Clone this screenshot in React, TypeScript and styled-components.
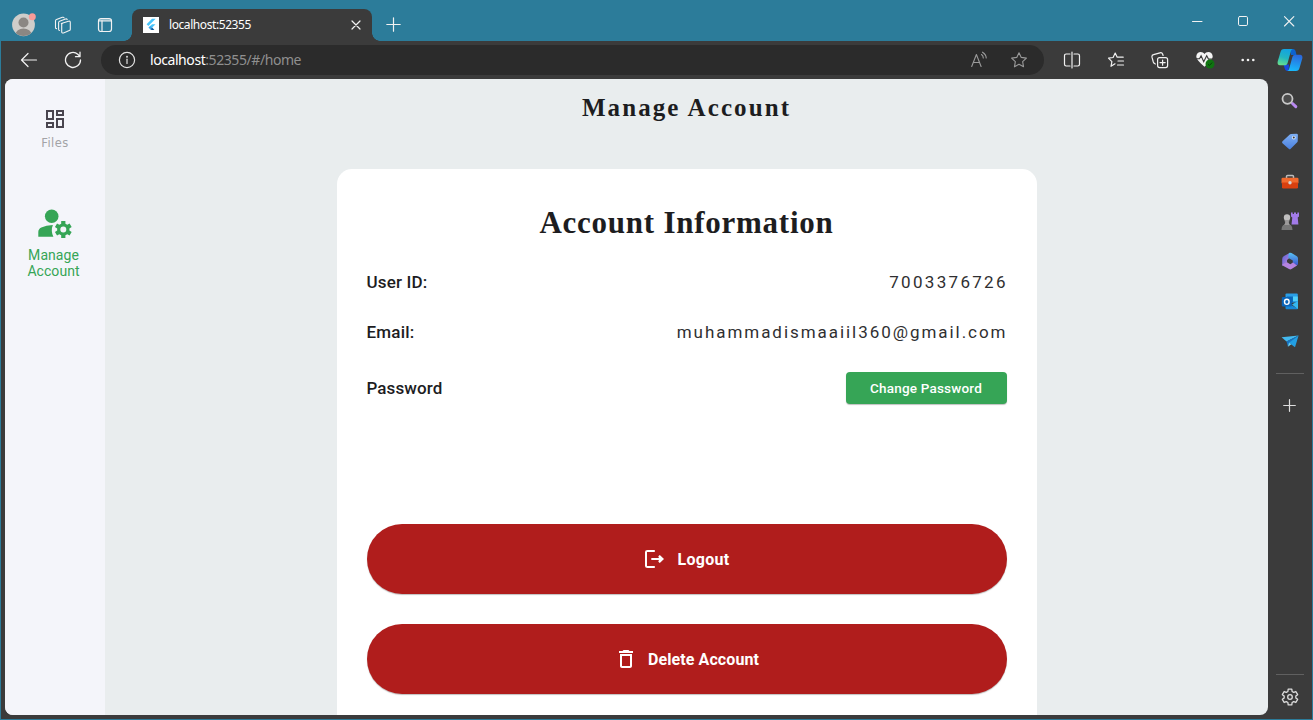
import React from "react";
import styled, { createGlobalStyle } from "styled-components";
import { MdOutlineDashboard, MdDeleteOutline } from "react-icons/md";

const GlobalStyle = createGlobalStyle`
  *, *::before, *::after { box-sizing: border-box; }
  body { margin: 0; overflow: hidden; font-family: Roboto, "Liberation Sans", sans-serif; }
  svg { display: block; flex: none; }
  button { font: inherit; border: 0; padding: 0; }
`;

const Window = styled.div`
  width: 1313px;
  height: 720px;
  display: flex;
  flex-direction: column;
  background: #3b3b3b;
  border: 1px solid #2c7c9a;
  border-top: 0;
`;

const TabStrip = styled.header`
  height: 41px;
  flex: none;
  display: flex;
  align-items: flex-end;
  background: #2c7c9a;
`;

const StripTools = styled.div`
  height: 33px;
  width: 131px;
  padding-left: 10px;
  display: flex;
  align-items: center;
`;

const Slot = styled.div<{ $w: number }>`
  width: ${(p) => p.$w}px;
  display: flex;
  justify-content: center;
  align-items: center;
`;

const Tab = styled.div`
  position: relative;
  width: 240px;
  height: 32px;
  padding: 0 11px 0 11px;
  display: flex;
  align-items: center;
  background: #3b3b3b;
  border-radius: 8px 8px 0 0;
  &::before, &::after {
    content: "";
    position: absolute;
    bottom: 0;
    width: 8px;
    height: 8px;
  }
  &::before { left: -8px; background: radial-gradient(circle at 0 0, transparent 7.5px, #3b3b3b 8px); }
  &::after { right: -8px; background: radial-gradient(circle at 100% 0, transparent 7.5px, #3b3b3b 8px); }
`;

const TabTitle = styled.span`
  flex: 1;
  padding-left: 10px;
  font: 12px/16px "Noto Sans", sans-serif;
  letter-spacing: -0.42px;
  color: #fff;
`;

const NewTab = styled.div`
  height: 33px;
  padding-left: 14px;
  display: flex;
  align-items: center;
`;

const Controls = styled.div`
  height: 41px;
  padding-top: 1px;
  margin-left: auto;
  display: flex;
`;

const Toolbar = styled.div`
  height: 38px;
  flex: none;
  display: flex;
  align-items: center;
`;

const AddressBar = styled.div`
  width: 943px;
  height: 30px;
  margin-left: 6px;
  padding: 0 16px 0 17px;
  display: flex;
  align-items: center;
  background: #2b2b2b;
  border-radius: 15px;
`;

const Url = styled.span`
  flex: 1;
  padding-left: 14px;
  font: 14px/20px "Noto Sans", sans-serif;
  letter-spacing: -0.43px;
  color: #8f8f8f;
  b { font-weight: 400; color: #fff; }
`;

const Body = styled.div`
  flex: 1;
  min-height: 0;
  display: flex;
  padding: 0 0 4px 4px;
`;

const Page = styled.div`
  width: 1263px;
  display: flex;
  overflow: hidden;
  border-radius: 8px;
  background: #e9edee;
`;

const Rail = styled.nav`
  width: 100px;
  display: flex;
  flex-direction: column;
  align-items: center;
  padding-top: 28px;
  background: #f4f5fa;
`;

const RailItem = styled.div<{ $active?: boolean }>`
  display: flex;
  flex-direction: column;
  align-items: center;
  margin-bottom: 52px;
  color: ${(p) => (p.$active ? "#36a556" : "#49454f")};
`;

const FilesLabel = styled.span`
  margin-top: 4px;
  font: 11.5px/16px "DejaVu Sans", sans-serif;
  letter-spacing: 0.45px;
  color: #a3a3a6;
`;

const AccountLabel = styled.span`
  margin: 4px 3px 0 0;
  font: 14px/16px Roboto, sans-serif;
  letter-spacing: 0.05px;
  text-align: center;
`;

const Main = styled.main`
  flex: 1;
  display: flex;
  flex-direction: column;
  align-items: center;
`;

const PageTitle = styled.h1`
  margin: 13px 0 45px;
  font: 700 25px/32px "Liberation Serif", serif;
  letter-spacing: 2.1px;
  color: #1d1d1f;
`;

const Card = styled.section`
  width: 700px;
  flex: 1;
  padding: 35px 30px 0;
  background: #fff;
  border-radius: 15px 15px 0 0;
`;

const CardTitle = styled.h2`
  margin: 0 0 18px;
  font: 700 31px/38px "Liberation Serif", serif;
  letter-spacing: 0.75px;
  text-align: center;
  color: #1d1d1f;
`;

const Row = styled.div<{ $h: number }>`
  height: ${(p) => p.$h}px;
  display: flex;
  align-items: center;
  justify-content: space-between;
  color: #1d1d1f;
`;

const Label = styled.span<{ $ls: number }>`
  font: 500 17px/24px Roboto, sans-serif;
  letter-spacing: ${(p) => p.$ls}px;
`;

const Value = styled.span<{ $ls: number }>`
  font: 400 17px/24px Roboto, sans-serif;
  letter-spacing: ${(p) => p.$ls}px;
  margin-right: ${(p) => 1 - p.$ls}px;
  color: #2f2f31;
`;

const ChangeButton = styled.button`
  width: 161px;
  height: 32px;
  border-radius: 4px;
  background: #36a556;
  box-shadow: 0 1px 1px rgba(0, 0, 0, 0.25);
  color: #fff;
  font: 500 13.5px/20px Roboto, sans-serif;
  letter-spacing: 0.2px;
`;

const Actions = styled.div`
  display: flex;
  flex-direction: column;
  gap: 30px;
  margin-top: 108px;
`;

const DangerButton = styled.button`
  height: 70px;
  width: 640px;
  display: flex;
  align-items: center;
  justify-content: center;
  gap: 10px;
  border-radius: 35px;
  background: #b01d1c;
  box-shadow: 0 1px 1px rgba(0, 0, 0, 0.25);
  color: #fff;
  font: 700 16px/24px Roboto, sans-serif;
`;

const ButtonText = styled.span<{ $ls: number }>`
  padding-top: 2px;
  letter-spacing: ${(p) => p.$ls}px;
`;

const EdgeBar = styled.aside`
  width: 44px;
  display: flex;
  flex-direction: column;
  align-items: center;
  padding-top: 2px;
`;

const EdgeItem = styled.div`
  height: 40px;
  display: grid;
  place-items: center;
`;

const Divider = styled.hr`
  width: 28px;
  height: 1px;
  margin: 12px 0;
  border: 0;
  background: #606060;
`;

const Spacer = styled.div`
  flex: 1;
`;

const SettingsItem = styled.div`
  padding: 1px 0 9px;
`;

type LineProps = { size?: number; color?: string; w?: number; box?: number; children: React.ReactNode };
const Line = ({ size = 20, color = "#f2f2f2", w = 1.1, box, children }: LineProps) => (
  <svg width={size} height={size} viewBox={`0 0 ${box ?? size} ${box ?? size}`} fill="none" stroke={color} strokeWidth={w} strokeLinecap="round" strokeLinejoin="round">
    {children}
  </svg>
);

const Avatar = () => (
  <svg width="26" height="26" viewBox="0 0 26 26">
    <defs><clipPath id="av"><circle cx="12.500" cy="12.800" r="11.200" /></clipPath></defs>
    <circle cx="12.500" cy="12.800" r="11.400" fill="#cfcdca" />
    <g clipPath="url(#av)" fill="#8b8783">
      <circle cx="12.500" cy="10.500" r="5" />
      <ellipse cx="12.500" cy="22.500" rx="8" ry="6" />
    </g>
    <circle cx="21.300" cy="4.800" r="3.500" fill="#f99b98" />
  </svg>
);

const Flutter = () => (
  <svg width="16" height="16" viewBox="0 0 16 16">
    <path fill="#fff" d="M0 0h16v16H0z" />
    <path fill="#47c5fb" d="M9 1.8h3.6L5.4 9 3.6 7.2z" />
    <path fill="#47c5fb" d="M9 7.2h3.5L9 10.7 7.2 9z" />
    <path fill="#35a9ef" d="M5.5 10.6 7.3 8.8l1.8 1.8-1.8 1.9z" />
    <path fill="#07589c" d="m7.3 12.4 1.800-1.800L11.400 13H9z" />
  </svg>
);

const Copilot = () => (
  <svg width="26" height="24" viewBox="0 0 26 24">
    <defs>
      <linearGradient id="c1" x1="0.5" y1="0" x2="0.2" y2="1"><stop stopColor="#13a3e0" /><stop offset=".5" stopColor="#22b5c2" /><stop offset="1" stopColor="#6ae08a" /></linearGradient>
      <linearGradient id="c2" x1="0.6" y1="0" x2="0.4" y2="1"><stop stopColor="#2b66dc" /><stop offset="1" stopColor="#18b9fb" /></linearGradient>
    </defs>
    <path fill="#0d62d0" d="M13 1h3c1.500 0 2.300 1 2.700 2.500L19.500 7H14z" />
    <path fill="#1746df" d="M6.500 16.500H12l-.5 6.500h-1c-1.500 0-2.400-1-2.800-2.500z" />
    <path fill="url(#c1)" d="M7 1h9c-1.200 0-1.800 1-2.200 2.500L10.600 15c-.5 1.500-1.500 2.300-3 2.300H3c-2 0-2.800-1.800-2.300-3.800L3.500 4C4 2 5 1 7 1z" />
    <path fill="url(#c2)" d="M19 23h-9c1.200 0 1.800-1 2.200-2.500L15.400 9c.5-1.500 1.500-2.300 3-2.300H23c2 0 2.800 1.800 2.300 3.800L22.500 20c-.5 2-1.500 3-3.500 3z" />
  </svg>
);

const STAR = "M9 1.700l2.250 4.700 5.150.7-3.750 3.600.9 5.100L9 13.350 4.450 15.800l.9-5.100L1.600 7.100l5.150-.7z";

const SearchIcon = () => (
  <svg width="18" height="18" viewBox="0 0 18 18" fill="none">
    <path d="m11.500 11.500 3.300 3.200" stroke="#b98af0" strokeWidth="3" strokeLinecap="round" />
    <circle cx="6.500" cy="6.800" r="5" fill="#4b4b4b" stroke="#c8c8c8" strokeWidth="1.800" />
  </svg>
);
const TagIcon = () => (
  <svg width="18" height="18" viewBox="0 0 18 18">
    <defs><linearGradient id="tg" x1="0" y1="0" x2="0" y2="1"><stop stopColor="#7fb0f5" /><stop offset="1" stopColor="#4a80dd" /></linearGradient></defs>
    <path fill="url(#tg)" d="M10 1.900 15.500 1.700q1.400 0 1.400 1.400L16.700 9q0 .7-.5 1.200l-6.500 6.500q-1 1-2 0L1.500 11.200q-1-1 0-2L8.800 2.500q.5-.6 1.200-.6z" />
    <circle cx="12.800" cy="5.600" r="1.900" fill="#d7e6fb" /><circle cx="12.800" cy="5.600" r="1" fill="#3a3a3a" />
  </svg>
);
const ToolboxIcon = () => (
  <svg width="18" height="18" viewBox="0 0 18 18">
    <path d="M5.500 6V4.500q0-1 1-1h5q1 0 1 1V6" fill="none" stroke="#bdbdbd" strokeWidth="1.500" />
    <rect x=".5" y="5.800" width="17" height="6" rx="1.300" fill="#f26a2e" />
    <path fill="#d9400f" d="M1 10.500h16v4.700q0 1.300-1.300 1.300H2.300Q1 16.500 1 15.200z" />
    <circle cx="9" cy="10.700" r="1.700" fill="#d4d4d4" />
  </svg>
);
const ChessIcon = () => (
  <svg width="20" height="20" viewBox="0 0 20 20">
    <path fill="#a27be8" d="M11 1.500h1.700V3h1.300V1.500h2V3h1.300V1.500H19v4l-1.300 1 .7 7H11.500l.8-7-1.300-1z" />
    <circle cx="7" cy="6.500" r="3.200" fill="#c0bfbf" />
    <path fill="#9c9a9a" d="M4.600 9h4.800v1.300l-.7.500q.2 2.400 1.600 3.400H3.700q1.400-1 1.600-3.400l-.7-.5z" />
    <path fill="#777" d="M3.200 14h7.600q1.700 1.500 1.700 5h-11q0-3.500 1.700-5z" />
  </svg>
);
const M365Icon = () => (
  <svg width="18" height="18" viewBox="0 0 18 18">
    <defs>
      <linearGradient id="m1" x1="0" y1="0" x2="0" y2="1"><stop stopColor="#58c1f3" /><stop offset="1" stopColor="#3d55cd" /></linearGradient>
      <linearGradient id="m2" x1="0" y1="0" x2="1" y2="1"><stop stopColor="#5a60d6" /><stop offset="1" stopColor="#c68be0" /></linearGradient>
    </defs>
    <path fill="url(#m2)" d="M9 .8 3 4Q1.200 5 1.200 7v7l4.800-3.500V8L9.500 5z" />
    <path fill="url(#m1)" d="M8 1.100q1.200-.7 2.500 0l5 2.900q1.500.8 1.500 2.500v5.200q0 1-.9 1.600L11.800 11.500V8.500L7 5.700z" />
    <path fill="#b583e0" d="M1.200 12.500 6 10.300l3.300 1.900 2.700-1.600 4.100 2.800-5.600 3.700q-1.200.7-2.500 0l-5.500-3.200Q1.200 13.500 1.200 12.500z" />
  </svg>
);
const OutlookIcon = () => (
  <svg width="18" height="18" viewBox="0 0 18 18">
    <path fill="#2a9ee6" d="M5.500 1.500h10.300q1 0 1 1v8H4.500v-8q0-1 1-1z" />
    <path fill="#0d6cbd" d="M6 4.500h6v6H6z" />
    <path fill="#50d0fa" d="M12 4.500h4.800V9H12z" />
    <path fill="#1688d8" d="M4.500 10 17 16.800q-.3.400-1 .4H5.500q-1 0-1-1z" />
    <path fill="#35b8f1" d="M17 9v7.200q0 .5-.4.800L11 12.500z" />
    <rect x=".8" y="5" width="10" height="9.500" rx="1" fill="#0a64b8" />
    <ellipse cx="5.800" cy="9.800" rx="2.300" ry="2.600" fill="none" stroke="#fff" strokeWidth="1.400" />
  </svg>
);
const PlaneIcon = () => (
  <svg width="18" height="18" viewBox="0 0 18 18">
    <path fill="#43baf0" d="M.6 5.200 17.600 3.500 5.500 9.600z" />
    <path fill="#1574c4" d="M5.500 9.600 17.600 3.500l-9.500 8-1.200 3.200z" />
    <path fill="#229fe4" d="m8 10.700 9.600-7.200L14 15.300z" />
    <path fill="#6cd5fa" d="m6.900 14.700 1.100-4 2.300 1.600z" />
  </svg>
);

const gearPath = (cx: number, cy: number, outer: number, inner: number, tooth: number, shoulder: number) => {
  let d = "";
  for (let i = 0; i < 6; i++) {
    const at = (deg: number, r: number) => {
      const a = ((i * 60 + deg - 90) * Math.PI) / 180;
      return `${(cx + r * Math.cos(a)).toFixed(2)} ${(cy + r * Math.sin(a)).toFixed(2)}`;
    };
    d += `${i ? "L" : "M"}${at(-tooth, outer)}L${at(tooth, outer)}L${at(shoulder, inner)}L${at(60 - shoulder, inner)}`;
  }
  return d + "z";
};

const Gear = () => (
  <Line size={18} w={1.300} color="#dedede">
    <path d={gearPath(9, 9, 8, 5.900, 13, 21)} />
    <circle cx="9" cy="9" r="2.300" />
  </Line>
);

const ManageAccountIcon = () => (
  <svg width="40" height="40" viewBox="0 0 40 40" fill="currentColor">
    <circle cx="16.700" cy="13.200" r="6.800" />
    <path d="M3.300 33.700V29q0-3 3-4.500Q11 22 17.900 21.900q-2.400 5.500.5 11.800z" />
    <path fillRule="evenodd" d={gearPath(28.300, 26.500, 8.700, 6.200, 14, 20) + "M28.300 23.500a3 3 0 1 0 0 6 3 3 0 1 0 0-6z"} />
  </svg>
);

const LogoutIcon = () => (
  <svg width="24" height="24" viewBox="0 0 24 24" fill="none" stroke="#fff" strokeWidth="2">
    <path d="M11.800 4H4.500Q3 4 3 5v14Q3 20 4.500 20h7.300" />
    <path d="M8.300 12h11" />
    <path fill="#fff" stroke="none" d="m15.300 9.300 1.500-1.400L21 12l-4.200 4.100-1.500-1.400L16.300 12z" />
  </svg>
);

export default function App() {
  return (
    <Window>
      <GlobalStyle />
      <TabStrip>
        <StripTools>
          <Slot $w={26}><Avatar /></Slot>
          <Slot $w={51}>
            <Line size={18} w={1.1}>
              <path d="M7.300 7.600 14.500 5.200q1.800-.5 1.800 1.200v6.800q0 1-1 1.400l-5.800 2.300q-1.800.6-1.800-1.200V8.400q0-.6.600-.8z" />
              <path d="M5.600 14.500q-1 0-1-1.200V6.700q0-1 1-1.400L11.500 3q1.300-.4 1.700.6" />
              <path d="M2.600 12.600q-1.100 0-1.100-1.200V5q0-1 1-1.400L8.400 1.300q1.300-.4 1.700.6" />
            </Line>
          </Slot>
          <Slot $w={33}>
            <Line size={16} w={1.2}>
              <rect x="1.500" y="1.500" width="13" height="13" rx="2.500" />
              <path d="M2 3h12M5 4v10" /><path d="M2 4h12" />
            </Line>
          </Slot>
        </StripTools>
        <Tab>
          <Flutter />
          <TabTitle>localhost:52355</TabTitle>
          <Line size={10} w={1.2}><path d="m1 1 8 8M9 1 1 9" /></Line>
        </Tab>
        <NewTab><Line size={15} w={1.2}><path d="M7.500.8v13.400M.8 7.500h13.400" /></Line></NewTab>
        <Controls>
          <Slot $w={46}><Line size={11} w={1}><path d="M.5 5.500h9.500" /></Line></Slot>
          <Slot $w={46}><Line size={11} w={1}><rect x=".5" y=".5" width="9" height="9" rx="1.300" /></Line></Slot>
          <Slot $w={46}><Line size={11} w={1.1}><path d="m.5.700 9.300 9.300M9.800.700.5 10" /></Line></Slot>
        </Controls>
      </TabStrip>

      <Toolbar>
        <Slot $w={55}><Line size={18} w={1.200}><path d="M16.500 9H1.500M8 2.500 1.500 9 8 15.500" /></Line></Slot>
        <Slot $w={33}><Line size={18} w={1.300}><path d="M16.500 9A7.500 7.500 0 1 1 13.800 3.200L15.800 5.400M16 1.200v4.500h-4.500" /></Line></Slot>
        <Slot $w={6}> </Slot>
        <AddressBar>
          <Line size={18} w={1.200} color="#e2e2e2"><circle cx="9" cy="9" r="7.600" /><path d="M9 8.200v4.300" /><circle cx="9" cy="5.700" r=".4" /></Line>
          <Url><b>localhost</b>:52355/#/home</Url>
          <Slot $w={18}>
            <Line size={18} w={1.100} color="#9a9a9a"><path d="m1.700 15.500 4.700-12 4.700 12M3.300 11.500h6.300M11.500 3.500q1.800 1.300 1.800 3.500M12.500 1.200q3.700 2.300 3.700 5.800" /></Line>
          </Slot>
          <Slot $w={22}> </Slot>
          <Line size={18} w={1.100} color="#9a9a9a"><path d={STAR} /></Line>
        </AddressBar>
        <Slot $w={55}>
          <Line size={18} w={1.200}><path d="M7 3H3.200Q1.500 3 1.500 4.700v8.600q0 1.700 1.700 1.700H7M9 1v16M11 3h3.800q1.700 0 1.700 1.700v8.600q0 1.700-1.700 1.700H11" /></Line>
        </Slot>
        <Slot $w={34}>
          <Line size={18} w={1.200}><path d="M8 12.800 4 15.300l.9-4.600L1.500 7.200l4.600-.7L8.200 2l2 4.200h6M11 10h5.500M10.500 14h6" /></Line>
        </Slot>
        <Slot $w={54}>
          <Line size={18} w={1.200}>
            <rect x="6.600" y="6.600" width="10" height="10" rx="2" /><path d="M11.600 9v5.200M9 11.600h5.200M4.400 13Q2.800 12.600 2.300 11L1 6.200Q.6 4.200 2.500 3.700L9 1.800q2-.5 2.600 1.200l.5 1.500" />
          </Line>
        </Slot>
        <Slot $w={35}>
          <svg width="20" height="18" viewBox="0 0 20 18">
            <path fill="#f4f4f4" d="M9.500 3.100C11-.1 17.500.1 17.700 5.300c0 3-2.800 5.600-8.200 10.500C4 10.900 1.300 8.300 1.300 5.300 1.500.1 8-.1 9.500 3.100z" />
            <path fill="none" stroke="#3b3b3b" strokeWidth="1.100" d="M0 7.700h4.500l1.600-3 2.600 6 3-6 1.800 3.400H18" />
            <circle cx="15" cy="13" r="4.500" fill="#0e7410" />
            <path fill="none" stroke="#073f09" d="m13 13.200 1.400 1.300 2.700-2.900" />
          </svg>
        </Slot>
        <Slot $w={51}>
          <svg width="14" height="4" viewBox="0 0 14 4" fill="#f2f2f2"><circle cx="1.700" cy="2" r="1.300" /><circle cx="7" cy="2" r="1.300" /><circle cx="12.300" cy="2" r="1.300" /></svg>
        </Slot>
        <Slot $w={34}><Copilot /></Slot>
      </Toolbar>

      <Body>
        <Page>
          <Rail>
            <RailItem>
              <MdOutlineDashboard size={24} />
              <FilesLabel>Files</FilesLabel>
            </RailItem>
            <RailItem $active>
              <ManageAccountIcon />
              <AccountLabel>Manage<br />Account</AccountLabel>
            </RailItem>
          </Rail>
          <Main>
            <PageTitle>Manage Account</PageTitle>
            <Card>
              <CardTitle>Account Information</CardTitle>
              <Row $h={44}>
                <Label $ls={0.15}>User ID:</Label>
                <Value $ls={2.3}>7003376726</Value>
              </Row>
              <Row $h={56}>
                <Label $ls={0.2}>Email:</Label>
                <Value $ls={1.95}>muhammadismaaiil360@gmail.com</Value>
              </Row>
              <Row $h={56}>
                <Label $ls={0.1}>Password</Label>
                <ChangeButton>Change Password</ChangeButton>
              </Row>
              <Actions>
                <DangerButton><LogoutIcon /><ButtonText $ls={0.3}>Logout</ButtonText></DangerButton>
                <DangerButton><MdDeleteOutline size={24} /><ButtonText $ls={0.1}>Delete Account</ButtonText></DangerButton>
              </Actions>
            </Card>
          </Main>
        </Page>
        <EdgeBar>
          <EdgeItem><SearchIcon /></EdgeItem>
          <EdgeItem><TagIcon /></EdgeItem>
          <EdgeItem><ToolboxIcon /></EdgeItem>
          <EdgeItem><ChessIcon /></EdgeItem>
          <EdgeItem><M365Icon /></EdgeItem>
          <EdgeItem><OutlookIcon /></EdgeItem>
          <EdgeItem><PlaneIcon /></EdgeItem>
          <Divider />
          <EdgeItem><Line size={14} w={1.200} color="#dedede"><path d="M6.500.7v11.600M.7 6.500h11.600" /></Line></EdgeItem>
          <Spacer />
          <Divider />
          <SettingsItem><Gear /></SettingsItem>
        </EdgeBar>
      </Body>
    </Window>
  );
}
